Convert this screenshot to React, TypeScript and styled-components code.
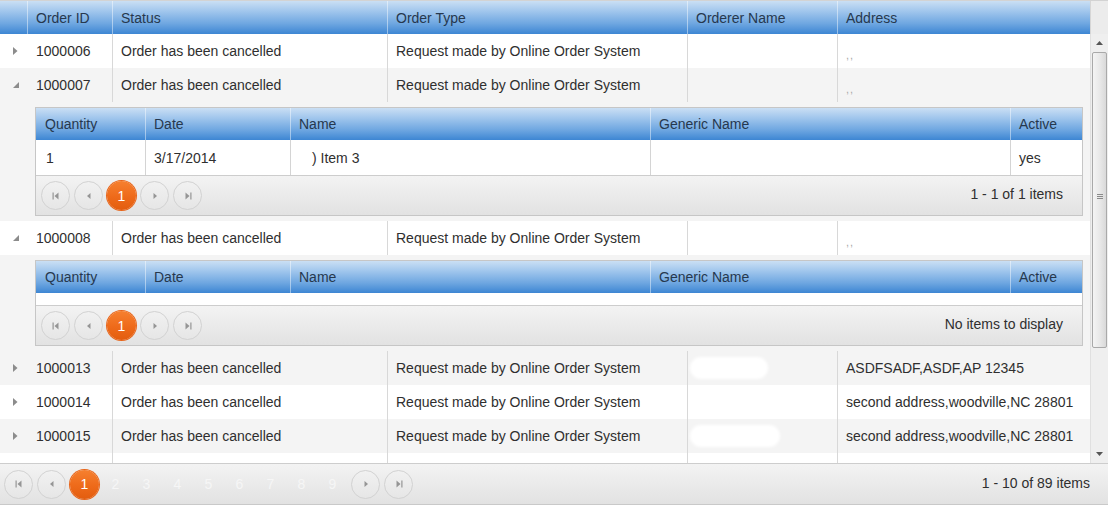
import React from "react";
import styled, { createGlobalStyle } from "styled-components";

const GlobalStyle = createGlobalStyle`
  html, body { margin: 0; padding: 0; background: #fff; }
  body {
    font-family: "Liberation Sans", Arial, sans-serif;
    font-size: 14px;
    color: #2f2f2f;
  }
  * { box-sizing: border-box; }
`;

const MASTER_COLS = "27px 85px 275px 300px 150px 1fr";
const DETAIL_COLS = "109px 145px 360px 360px 1fr";

const HEADER_BG =
  "linear-gradient(to bottom, #cadff4 0%, #a2c7ed 30%, #6fa7e1 68%, #3d86d3 100%)";
const PAGER_BG = "linear-gradient(to bottom, #f3f3f3 0%, #e2e2e2 100%)";

/* ---------- grid shell ---------- */

const Grid = styled.div`
  width: 1108px;
  border-top: 1px solid #d3d3d3;
  border-bottom: 1px solid #c9c9c9;
  background: #fff;
`;

const HeaderBar = styled.div`
  display: flex;
  height: 33px;
`;

const HeaderCells = styled.div<{ $cols: string }>`
  flex: 1;
  display: grid;
  grid-template-columns: ${(p) => p.$cols};
  background: ${HEADER_BG};
`;

const HeaderCell = styled.div<{ $first?: boolean; $pad?: number }>`
  display: flex;
  align-items: center;
  padding-left: ${(p) => p.$pad ?? 8}px;
  color: #26384e;
  white-space: nowrap;
  border-left: ${(p) => (p.$first ? "none" : "1px solid rgba(255,255,255,0.45)")};
`;

const HeaderScrollPad = styled.div`
  width: 18px;
  background: #ececec;
  border-left: 1px solid #d6d6d6;
`;

const Body = styled.div`
  display: flex;
  height: 429px;
`;

const Rows = styled.div`
  flex: 1;
  overflow: hidden;
`;

/* ---------- master rows ---------- */

const MasterRow = styled.div<{ $alt: boolean }>`
  display: grid;
  grid-template-columns: ${MASTER_COLS};
  height: 34px;
  background: ${(p) => (p.$alt ? "#f4f4f4" : "#ffffff")};
`;

const Cell = styled.div<{ $divider?: boolean; $pad?: number }>`
  display: flex;
  align-items: center;
  padding-left: ${(p) => p.$pad ?? 8}px;
  white-space: nowrap;
  overflow: hidden;
  border-left: ${(p) => (p.$divider ? "1px solid #d8d8d8" : "none")};
`;

const ToggleCell = styled.div`
  display: flex;
  align-items: center;
  justify-content: center;
  padding-left: 4px;
`;

const FaintCommas = styled.span`
  color: #a8a8a8;
  font-size: 11px;
  padding-top: 8px;
  letter-spacing: 1px;
`;

const Redaction = styled.span<{ $w: number }>`
  display: inline-block;
  width: ${(p) => p.$w}px;
  height: 22px;
  margin-left: -6px;
  border-radius: 11px;
  background: #fff;
  filter: blur(1.5px);
`;

/* ---------- detail rows ---------- */

const DetailRow = styled.div`
  display: grid;
  grid-template-columns: 27px 1fr;
  background: #f4f4f4;
`;

const DetailCell = styled.div`
  padding: 5px 7px 5px 8px;
`;

const SubGrid = styled.div`
  border: 1px solid #c6c6c6;
  background: #fff;
`;

const SubHeader = styled.div`
  display: grid;
  grid-template-columns: ${DETAIL_COLS};
  height: 32px;
  background: ${HEADER_BG};
`;

const SubRow = styled.div`
  display: grid;
  grid-template-columns: ${DETAIL_COLS};
  height: 35px;
  background: #fff;
`;

const EmptyRow = styled.div`
  height: 12px;
  background: #fff;
`;

const SubCell = styled.div<{ $divider?: boolean; $pad?: number }>`
  display: flex;
  align-items: center;
  padding-left: ${(p) => p.$pad ?? 8}px;
  white-space: nowrap;
  border-left: ${(p) => (p.$divider ? "1px solid #d4d4d4" : "none")};
`;

/* ---------- pager ---------- */

const Pager = styled.div<{ $h: number; $pad: number; $right: number }>`
  display: flex;
  align-items: center;
  height: ${(p) => p.$h}px;
  padding: 0 ${(p) => p.$right}px 0 ${(p) => p.$pad}px;
  border-top: 1px solid #cdcdcd;
  background: ${PAGER_BG};
`;

const NavButton = styled.span`
  width: 29px;
  height: 29px;
  margin-right: 4px;
  border-radius: 50%;
  border: 1px solid #d2d2d2;
  background: linear-gradient(to bottom, #f1f1f1, #e6e6e6);
  display: flex;
  align-items: center;
  justify-content: center;
  flex: none;
`;

const PageList = styled.div`
  display: flex;
  gap: 2px;
  margin-right: 4px;
`;

const PageNumber = styled.span<{ $current?: boolean }>`
  width: 29px;
  height: 29px;
  border-radius: 50%;
  display: flex;
  align-items: center;
  justify-content: center;
  font-size: 14px;
  color: ${(p) => (p.$current ? "#ffffff" : "#f6f6f6")};
  background: ${(p) =>
    p.$current ? "linear-gradient(to bottom, #f6802f 0%, #ee6a1a 55%, #e35d0f 100%)" : "transparent"};
  box-shadow: ${(p) => (p.$current ? "0 0 0 1px #e8651a" : "none")};
`;

const PagerInfo = styled.span`
  margin-left: auto;
  padding-bottom: 3px;
  color: #2f2f2f;
  white-space: nowrap;
`;

/* ---------- scrollbar ---------- */

const ScrollTrack = styled.div`
  width: 18px;
  display: flex;
  flex-direction: column;
  align-items: center;
  background: #efefef;
  border-left: 1px solid #e0e0e0;
`;

const ScrollArrow = styled.div`
  height: 18px;
  display: flex;
  align-items: center;
  justify-content: center;
  width: 100%;
`;

const ScrollThumb = styled.div`
  width: 15px;
  height: 296px;
  border: 1px solid #a9a9a9;
  border-radius: 2px;
  background: linear-gradient(to right, #f4f4f4 0%, #e9e9e9 50%, #d9d9d9 100%);
  display: flex;
  align-items: center;
  justify-content: center;
`;

const ScrollSpacer = styled.div`
  flex: 1;
`;

const Grip = styled.div`
  width: 6px;
  display: flex;
  flex-direction: column;
  gap: 1px;
  margin-top: -8px;
  & > i {
    display: block;
    height: 1px;
    background: #8a8a8a;
  }
`;

/* ---------- icons ---------- */

const ExpandIcon = ({ open }: { open: boolean }) =>
  open ? (
    <svg width="6" height="6" viewBox="0 0 6 6">
      <polygon points="6,0 6,6 0,6" fill="#8c8c8c" />
    </svg>
  ) : (
    <svg width="5" height="8" viewBox="0 0 5 8">
      <polygon points="0,0 4.5,4 0,8" fill="#8c8c8c" />
    </svg>
  );

type NavKind = "first" | "prev" | "next" | "last";

const NavIcon = ({ kind }: { kind: NavKind }) => (
  <svg width="8" height="8" viewBox="0 0 8 8">
    {kind === "first" && (
      <>
        <rect x="0.5" y="0.5" width="1.2" height="7" fill="#959595" />
        <polygon points="6.5,0.5 6.5,7.5 2.5,4" fill="#959595" />
      </>
    )}
    {kind === "prev" && <polygon points="5.5,1 5.5,7 2,4" fill="#959595" />}
    {kind === "next" && <polygon points="2.5,1 2.5,7 6,4" fill="#959595" />}
    {kind === "last" && (
      <>
        <polygon points="1.5,0.5 1.5,7.5 5.5,4" fill="#959595" />
        <rect x="6.3" y="0.5" width="1.2" height="7" fill="#959595" />
      </>
    )}
  </svg>
);

const ArrowGlyph = ({ up }: { up: boolean }) => (
  <svg width="7" height="4" viewBox="0 0 7 4">
    <polygon points={up ? "0,4 3.5,0 7,4" : "0,0 3.5,4 7,0"} fill="#555" />
  </svg>
);

/* ---------- data ---------- */

type Item = { qty: string; date: string; name: string; generic: string; active: string };

type Order = {
  id: string;
  address?: string;
  redaction?: number;
  detail?: Item[];
};

const ORDER_TYPE = "Request made by Online Order System";
const STATUS = "Order has been cancelled";

const orders: Order[] = [
  { id: "1000006" },
  { id: "1000007", detail: [{ qty: "1", date: "3/17/2014", name: ") Item 3", generic: "", active: "yes" }] },
  { id: "1000008", detail: [] },
  { id: "1000013", address: "ASDFSADF,ASDF,AP 12345", redaction: 78 },
  { id: "1000014", address: "second address,woodville,NC 28801" },
  { id: "1000015", address: "second address,woodville,NC 28801", redaction: 90 },
];

const masterHeaders = ["Order ID", "Status", "Order Type", "Orderer Name", "Address"];
const detailHeaders = ["Quantity", "Date", "Name", "Generic Name", "Active"];

/* ---------- pieces ---------- */

const PagerBar = ({
  height,
  pad,
  right,
  pages,
  info,
}: {
  height: number;
  pad: number;
  right: number;
  pages: number;
  info: string;
}) => (
  <Pager $h={height} $pad={pad} $right={right}>
    <NavButton>
      <NavIcon kind="first" />
    </NavButton>
    <NavButton>
      <NavIcon kind="prev" />
    </NavButton>
    <PageList>
      {Array.from({ length: pages }, (_, i) => (
        <PageNumber key={i} $current={i === 0}>
          {i + 1}
        </PageNumber>
      ))}
    </PageList>
    <NavButton>
      <NavIcon kind="next" />
    </NavButton>
    <NavButton>
      <NavIcon kind="last" />
    </NavButton>
    <PagerInfo>{info}</PagerInfo>
  </Pager>
);

const ItemsGrid = ({ items }: { items: Item[] }) => (
  <SubGrid>
    <SubHeader>
      {detailHeaders.map((h, i) => (
        <HeaderCell key={h} $first={i === 0} $pad={i === 0 ? 9 : 8}>
          {h}
        </HeaderCell>
      ))}
    </SubHeader>
    {items.length === 0 ? (
      <EmptyRow />
    ) : (
      items.map((it, i) => (
        <SubRow key={i}>
          <SubCell $pad={10}>{it.qty}</SubCell>
          <SubCell $divider>{it.date}</SubCell>
          <SubCell $divider $pad={21}>
            {it.name}
          </SubCell>
          <SubCell $divider>{it.generic}</SubCell>
          <SubCell $divider>{it.active}</SubCell>
        </SubRow>
      ))
    )}
    <PagerBar
      height={40}
      pad={5}
      right={19}
      pages={1}
      info={items.length === 0 ? "No items to display" : `1 - ${items.length} of ${items.length} items`}
    />
  </SubGrid>
);

export default function App() {
  return (
    <>
      <GlobalStyle />
      <Grid>
        <HeaderBar>
          <HeaderCells $cols={MASTER_COLS}>
            <HeaderCell $first />
            {masterHeaders.map((h) => (
              <HeaderCell key={h}>{h}</HeaderCell>
            ))}
          </HeaderCells>
          <HeaderScrollPad />
        </HeaderBar>

        <Body>
          <Rows>
            {orders.map((o, idx) => (
              <React.Fragment key={o.id}>
                <MasterRow $alt={idx % 2 === 1}>
                  <ToggleCell>
                    <ExpandIcon open={!!o.detail} />
                  </ToggleCell>
                  <Cell $pad={9}>{o.id}</Cell>
                  <Cell $divider>{STATUS}</Cell>
                  <Cell $divider>{ORDER_TYPE}</Cell>
                  <Cell $divider>{o.redaction ? <Redaction $w={o.redaction} /> : null}</Cell>
                  <Cell $divider>
                    {o.address === undefined ? <FaintCommas>,,</FaintCommas> : o.address}
                  </Cell>
                </MasterRow>
                {o.detail && (
                  <DetailRow>
                    <div />
                    <DetailCell>
                      <ItemsGrid items={o.detail} />
                    </DetailCell>
                  </DetailRow>
                )}
              </React.Fragment>
            ))}
            {/* next row, scrolled mostly out of view */}
            <MasterRow $alt={false}>
              <ToggleCell />
              <Cell />
              <Cell $divider />
              <Cell $divider />
              <Cell $divider />
              <Cell $divider />
            </MasterRow>
          </Rows>
          <ScrollTrack>
            <ScrollArrow>
              <ArrowGlyph up />
            </ScrollArrow>
            <ScrollThumb>
              <Grip>
                <i />
                <i />
                <i />
              </Grip>
            </ScrollThumb>
            <ScrollSpacer />
            <ScrollArrow>
              <ArrowGlyph up={false} />
            </ScrollArrow>
          </ScrollTrack>
        </Body>

        <PagerBar height={41} pad={4} right={18} pages={9} info="1 - 10 of 89 items" />
      </Grid>
    </>
  );
}
